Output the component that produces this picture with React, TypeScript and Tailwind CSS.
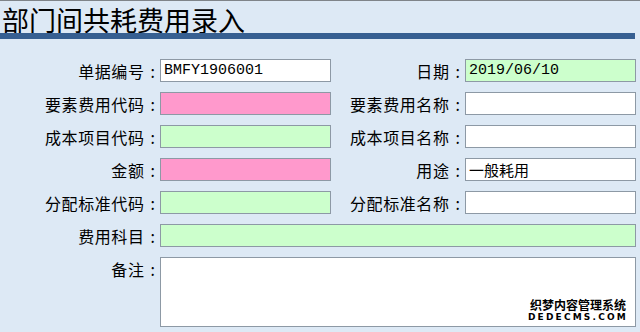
import * as React from 'react';

const cjk = "font-['Noto_Sans_CJK_SC',sans-serif]";
const mono = "font-['Liberation_Mono','Noto_Sans_CJK_SC',monospace]";

interface FieldProps {
  label: string;
  value?: string;
  tone?: 'white' | 'pink' | 'green';
  wide?: boolean;
}

const toneClass = {
  white: 'bg-white',
  pink: 'bg-[#ff99cc]',
  green: 'bg-[#ccffcc]',
};

const Label: React.FC<{ text: string; top?: boolean }> = ({ text, top }) => (
  <div
    className={`flex justify-end pr-[5px] text-[16px] leading-none tracking-[0.6px] text-black ${cjk} ${
      top ? 'items-start pt-[4px]' : 'items-center'
    }`}
  >
    {text}
    <span className="ml-[6px] tracking-normal">:</span>
  </div>
);

const Field: React.FC<FieldProps> = ({ label, value, tone = 'white', wide }) => {
  const isLatin = value ? /^[\x00-\x7f]+$/.test(value) : false;
  return (
    <>
      <Label text={label} />
      <div
        className={`h-[23px] border border-[#8d99a5] ${toneClass[tone]} flex items-center pl-[3px] text-[15px] leading-none text-black ${
          wide ? 'col-span-3' : ''
        } ${isLatin ? mono : cjk}`}
      >
        {value}
      </div>
    </>
  );
};

export default function App() {
  return (
    <div className="w-[640px] h-[332px] bg-[#dde9f5]">
      <div className="h-[1px] bg-[#7f8489]" />
      <div className="h-[32px] pl-[2px]">
        <h1 className={`text-[27px] leading-[38px] text-black ${cjk}`}>部门间共耗费用录入</h1>
      </div>
      <div className="relative h-[6px] w-[635px] bg-[#365f91]" />

      <div className="mt-[20px] grid grid-cols-[160px_171px_134px_171px] gap-y-[10px]">
        <Field label="单据编号" value="BMFY1906001" />
        <Field label="日期" value="2019/06/10" tone="green" />

        <Field label="要素费用代码" tone="pink" />
        <Field label="要素费用名称" />

        <Field label="成本项目代码" tone="green" />
        <Field label="成本项目名称" />

        <Field label="金额" tone="pink" />
        <Field label="用途" value="一般耗用" />

        <Field label="分配标准代码" tone="green" />
        <Field label="分配标准名称" />

        <Field label="费用科目" tone="green" wide />

        <Label text="备注" top />
        <div className="col-span-3 relative h-[70px] border border-[#8d99a5] bg-white">
          {/* watermark overlay */}
          <div className="absolute right-[7px] bottom-[4px] flex flex-col items-center gap-[2px] text-black [text-shadow:1px_0_0_#fff,-1px_0_0_#fff,0_1px_0_#fff,0_-1px_0_#fff]">
            <span className={`text-[12px] leading-[12px] font-bold ${cjk}`}>织梦内容管理系统</span>
            <span className="text-[9px] leading-[9px] font-bold tracking-[2.2px] font-['DejaVu_Sans',sans-serif]">
              DEDECMS.COM
            </span>
          </div>
        </div>
      </div>
    </div>
  );
}
